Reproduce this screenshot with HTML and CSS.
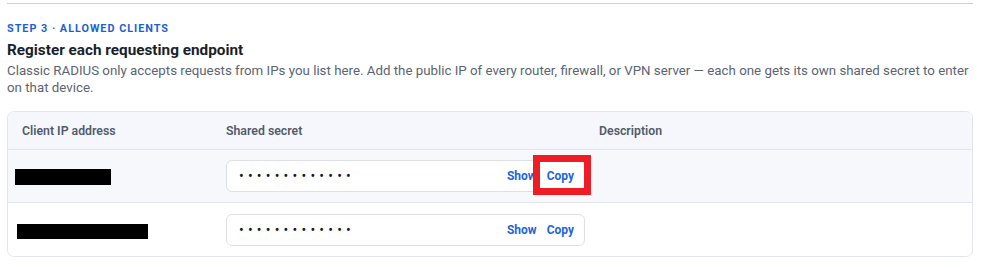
FILE: index.html
```html
<!DOCTYPE html>
<html lang="en">
<head>
<meta charset="utf-8">
<title>Allowed clients</title>
<link rel="stylesheet" href="styles.css">
</head>
<body>
<section class="step">
  <div class="step-label">STEP 3 · ALLOWED CLIENTS</div>
  <h2 class="step-title">Register each requesting endpoint</h2>
  <p class="step-desc">Classic RADIUS only accepts requests from IPs you list here. Add the public IP of every router, firewall, or VPN server — each one gets its own shared secret to enter on that device.</p>

  <div class="table">
    <div class="row head">
      <div class="cell">Client IP address</div>
      <div class="cell">Shared secret</div>
      <div class="cell">Description</div>
    </div>
    <div class="row body hover">
      <div class="cell"><span class="redact r1"></span></div>
      <div class="cell">
        <div class="secret">
          <span class="dots">•••••••••••••</span>
          <span class="act">Show</span>
          <span class="act">Copy</span>
        </div>
      </div>
      <div class="cell"></div>
    </div>
    <div class="row body last">
      <div class="cell"><span class="redact r2"></span></div>
      <div class="cell">
        <div class="secret">
          <span class="dots">•••••••••••••</span>
          <span class="act">Show</span>
          <span class="act">Copy</span>
        </div>
      </div>
      <div class="cell"></div>
    </div>
    <div class="highlight"></div>
  </div>
</section>
</body>
</html>
```

FILE: styles.css
```css
* { box-sizing: border-box; }
html, body { margin: 0; padding: 0; background: #ffffff; }
body {
  font-family: Roboto, "Liberation Sans", Arial, sans-serif;
  color: #1b1f2a;
}
.step {
  width: 966px;
  margin: 3px 0 0 7px;
  border-top: 1px solid #cfd0d3;
  padding-top: 18px;
}
.step-label {
  font-size: 10.8px;
  font-weight: 700;
  letter-spacing: 1px;
  color: #1c5fd6;
  line-height: 14px;
}
.step-title {
  margin: 4px 0 0;
  font-size: 15.3px;
  font-weight: 700;
  line-height: 20px;
  color: #1b1f2a;
}
.step-desc {
  margin: 2px 0 0;
  font-size: 13.3px;
  line-height: 17px;
  color: #5b6472;
}
.table {
  position: relative;
  margin-top: 15px;
  border: 1px solid #e3e6f2;
  border-radius: 7px;
}
.row {
  display: grid;
  grid-template-columns: 204px 373px 1fr;
  align-items: center;
}
.row.body { border-top: 1px solid #e3e6f0; }
.row.head {
  height: 37px;
  background: #f6f7fc;
  border-radius: 7px 7px 0 0;
  font-size: 12.3px;
  font-weight: 600;
  color: #525b6b;
}
.row.hover {
  height: 53px;
  background: #f7f8fc;
}
.row.last {
  height: 54px;
  border-radius: 0 0 7px 7px;
}
.cell { padding-left: 14px; }
.head .cell { padding-top: 1px; }
.redact {
  display: inline-block;
  background: #000;
  vertical-align: middle;
}
.r1 { width: 96px; height: 16px; margin-left: -7px; margin-top: 0; }
.r2 { width: 131px; height: 15px; margin-left: -5px; margin-top: 2px; }
.secret {
  display: flex;
  align-items: center;
  height: 32px;
  width: 359px;
  background: #ffffff;
  border: 1px solid #dcdfe6;
  border-radius: 6px;
  padding: 0 10px 0 12px;
}
.dots {
  flex: 1;
  font-size: 14px;
  letter-spacing: 4.2px;
  color: #141820;
  line-height: 1;
}
.act {
  font-size: 12px;
  font-weight: 700;
  color: #1f64df;
  margin-left: 10px;
}
.highlight {
  position: absolute;
  left: 525px;
  top: 43px;
  width: 58px;
  height: 40px;
  border: 7px solid #ee1c25;
}
```
